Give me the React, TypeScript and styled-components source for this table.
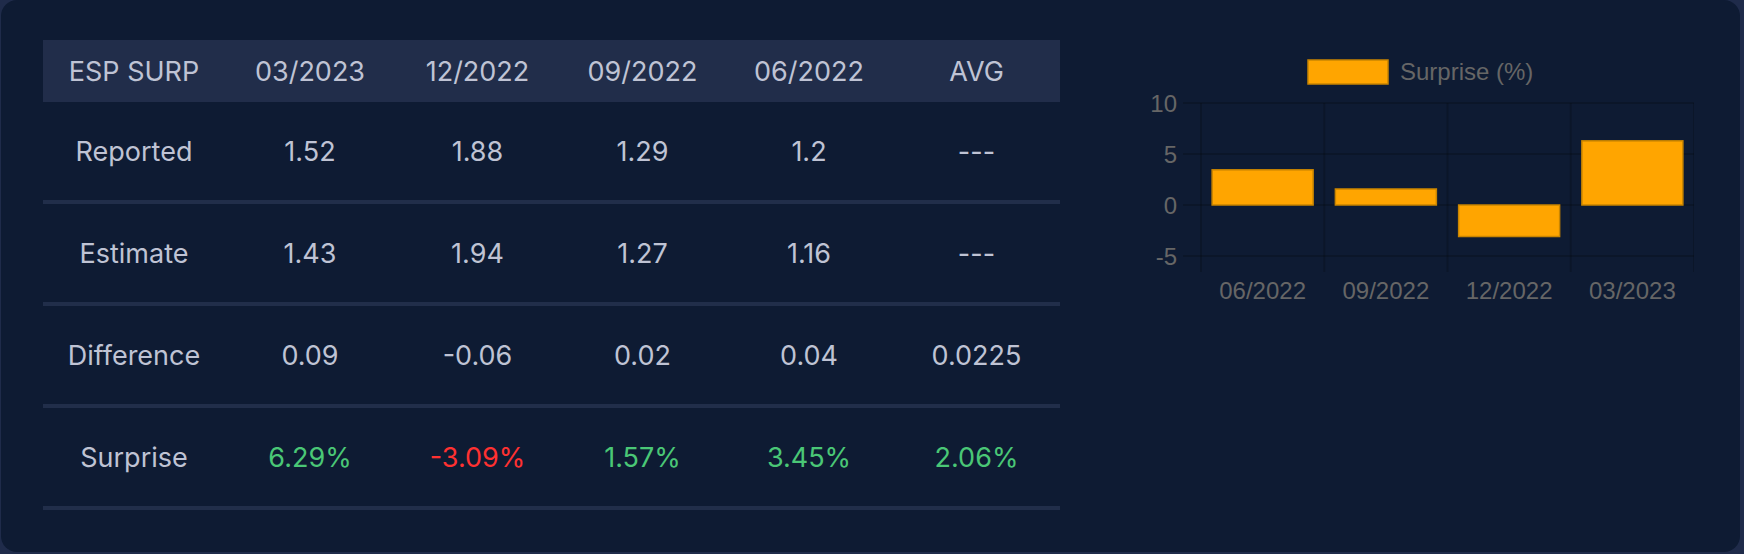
import styled, { createGlobalStyle } from 'styled-components'

const GlobalStyle = createGlobalStyle`
  html, body {
    margin: 0;
    padding: 0;
    background: #1f2b4a;
  }
  body {
    font-family: Inter, "Noto Sans", sans-serif;
  }
`;

const Card = styled.div`
  box-sizing: border-box;
  margin-left: 1px;
  width: 1739px;
  height: 552px;
  border-radius: 16px;
  background: #0e1b33;
  padding: 40px 46px 0 42px;
  display: grid;
  grid-template-columns: 1017px 548px;
  column-gap: 86px;
  align-items: start;
`;

const Table = styled.div`
  display: flex;
  flex-direction: column;
`;

const COLS = '182px 170px 165px 165px 168px 167px';

const HeadRow = styled.div`
  display: grid;
  grid-template-columns: ${COLS};
  height: 62px;
  background: #212d4a;
`;

const Row = styled.div`
  display: grid;
  grid-template-columns: ${COLS};
  height: 98px;
  border-bottom: 4px solid #212e4a;
`;

const Cell = styled.div<{ tone?: 'up' | 'down' }>`
  display: flex;
  align-items: center;
  justify-content: center;
  font-size: 27px;
  color: ${props => props.tone === 'up' ? '#4ac776' : props.tone === 'down' ? '#ff3131' : '#bfc3d4'};
  white-space: nowrap;
`;

const ChartBox = styled.div`
  width: 548px;
  height: 272px;
`;

const headers = ['ESP SURP', '03/2023', '12/2022', '09/2022', '06/2022', 'AVG'];

const rows: { label: string; values: string[] }[] = [
  { label: 'Reported', values: ['1.52', '1.88', '1.29', '1.2', '---'] },
  { label: 'Estimate', values: ['1.43', '1.94', '1.27', '1.16', '---'] },
  { label: 'Difference', values: ['0.09', '-0.06', '0.02', '0.04', '0.0225'] },
  { label: 'Surprise', values: ['6.29%', '-3.09%', '1.57%', '3.45%', '2.06%'] },
];

const chartData = [
  { label: '06/2022', value: 3.45 },
  { label: '09/2022', value: 1.57 },
  { label: '12/2022', value: -3.09 },
  { label: '03/2023', value: 6.29 },
];

// plot area inside the svg
const PX0 = 55;
const PX1 = 548;
const PY0 = 63;
const PY1 = 216;
const YMAX = 10;
const YMIN = -5;
const yOf = (v: number) => PY0 + ((YMAX - v) / (YMAX - YMIN)) * (PY1 - PY0);

const SurpriseChart = () => {
  const step = (PX1 - PX0) / chartData.length;
  const grid = 'rgba(0,0,0,0.18)';
  const font = '"Liberation Sans", Arial, sans-serif';
  return (
    <svg width="548" height="272" viewBox="0 0 548 272">
      <rect x="162" y="20" width="80" height="24" fill="#ffa500" stroke="#c98500" strokeWidth="1.5" />
      <text x="254" y="40" fontSize="24" fill="#666" fontFamily={font}>Surprise (%)</text>

      {[10, 5, 0, -5].map(v => (
        <g key={v}>
          <line x1="37" x2={PX1} y1={yOf(v)} y2={yOf(v)} stroke={grid} strokeWidth="2" />
          <text x="31" y={yOf(v) + 8.5} fontSize="24" fill="#666" textAnchor="end" fontFamily={font}>{v}</text>
        </g>
      ))}

      {Array.from({ length: chartData.length + 1 }).map((_, i) => (
        <line key={i} x1={PX0 + i * step} x2={PX0 + i * step} y1={PY0} y2={232} stroke={grid} strokeWidth="2" />
      ))}

      {chartData.map((d, i) => {
        const cx = PX0 + step * (i + 0.5);
        const top = Math.min(yOf(d.value), yOf(0));
        const h = Math.abs(yOf(d.value) - yOf(0));
        return (
          <g key={d.label}>
            <rect x={cx - 50.5} y={top} width="101" height={h} fill="#ffa500" stroke="#c98500" strokeWidth="1.5" />
            <text x={cx} y="259" fontSize="24" fill="#666" textAnchor="middle" fontFamily={font}>{d.label}</text>
          </g>
        );
      })}
    </svg>
  );
};

const App = () => {
  const toneOf = (label: string, v: string) => {
    if (label !== 'Surprise') return undefined;
    return v.startsWith('-') ? 'down' : 'up';
  };

  return (
    <>
      <GlobalStyle />
      <Card>
        <Table>
          <HeadRow>
            {headers.map(h => <Cell key={h}>{h}</Cell>)}
          </HeadRow>
          {rows.map(r => (
            <Row key={r.label}>
              <Cell>{r.label}</Cell>
              {r.values.map((v, i) => (
                <Cell key={i} tone={toneOf(r.label, v)}>{v}</Cell>
              ))}
            </Row>
          ))}
        </Table>
        <ChartBox>
          <SurpriseChart />
        </ChartBox>
      </Card>
    </>
  );
};

export default App;
